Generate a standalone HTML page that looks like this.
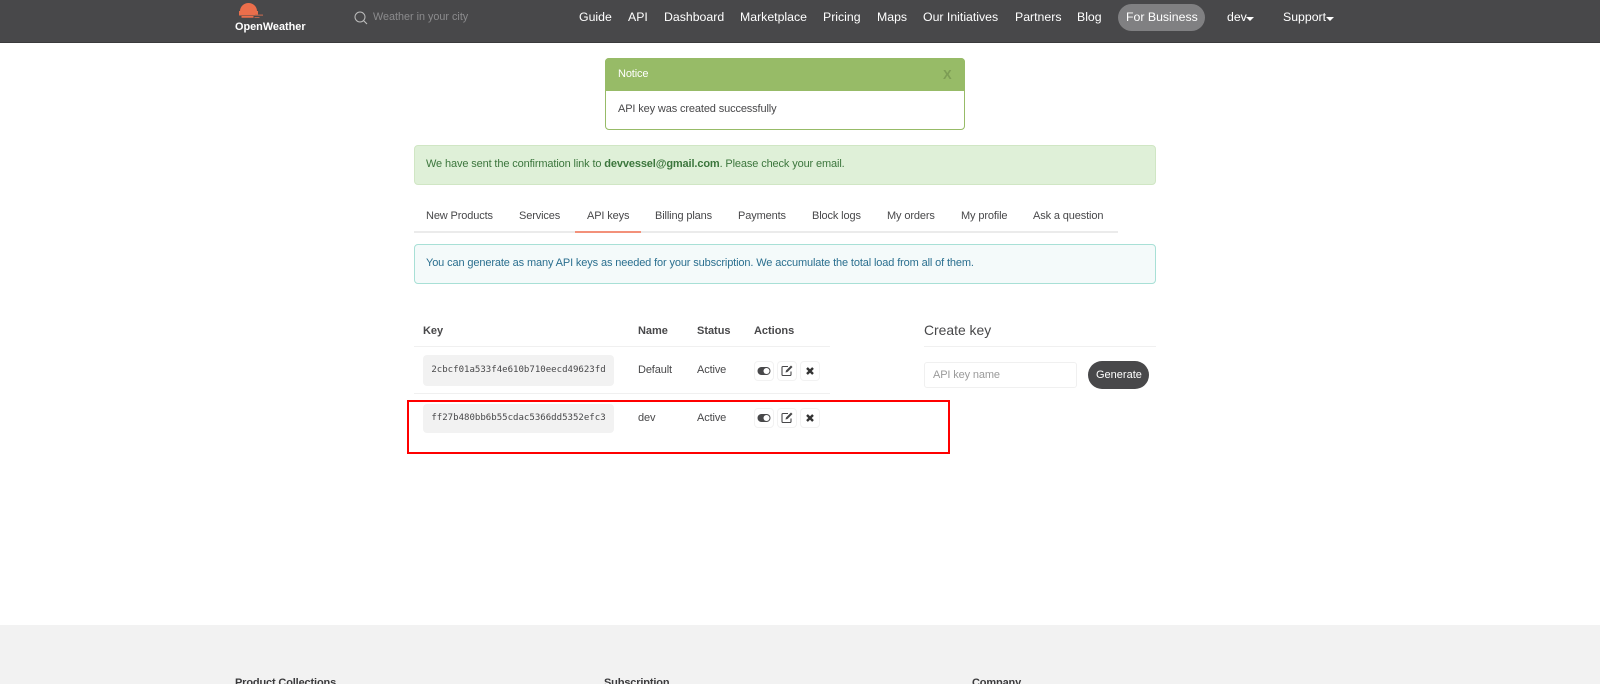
<!DOCTYPE html>
<html>
<head>
<meta charset="utf-8">
<style>
html,body{margin:0;padding:0;background:#fff;overflow:hidden;width:1600px;height:684px}
#p{width:1600px;height:684px;overflow:hidden;position:relative;font-family:"Liberation Sans",Arial,sans-serif;font-size:11px;letter-spacing:-.13px;color:#48484a}
.a{position:absolute;white-space:nowrap;line-height:16px}
.nav{color:#fff;font-size:12.3px;letter-spacing:0;top:9px}
.tab{top:208px;color:#48484a}
.box{position:absolute;box-sizing:border-box}
.th{font-weight:bold;top:323px;letter-spacing:-.02px}
.code{position:absolute;left:423px;width:191px;background:#f2f2f2;border-radius:4px;font-family:"DejaVu Sans Mono","Liberation Mono",monospace;font-size:9.06px;letter-spacing:0;color:#48484a;text-align:center;white-space:nowrap}
.btn{position:absolute;width:20px;height:20px;box-sizing:border-box;border:1px solid #f2f2f2;border-radius:4px;background:#fff}
.btn svg{position:absolute;left:-1px;top:-1.500px}
.ft{font-weight:bold;top:675px;color:#3a3a3c;letter-spacing:-.15px}
</style>
</head>
<body>
<div id="p">
<div class="box" style="left:0;top:0;width:1600px;height:43px;background:#48484a;border-bottom:1px solid #3a3a3c"></div>
<svg class="box" style="left:235px;top:0" width="32" height="22" viewBox="0 0 32 22">
<path d="M5 11a8.500 8 0 0 1 17 0z" fill="#eb6e4b"/>
<path d="M4 11h19v4.500H4zM6.500 16h12v1.800h-12z" fill="#eb6e4b"/>
<path d="M20 14.500h8v1.300h-8zM19.500 17h5v1h-5z" fill="#b5654f"/>
</svg>
<div class="a" style="left:235px;top:19px;color:#fff;font-size:10.9px;letter-spacing:0;font-weight:bold">OpenWeather</div>
<svg class="box" style="left:354px;top:11px" width="14" height="14" viewBox="0 0 14 14"><circle cx="6" cy="6" r="5" fill="none" stroke="#bdbdbd" stroke-width="1"/><path d="M9.500 9.500L13 13" stroke="#bdbdbd" stroke-width="1.100"/></svg>
<div class="a" style="left:373px;top:9px;color:#8b8b8d;font-size:10.8px;letter-spacing:0">Weather in your city</div>

<div class="a nav" style="left:579px">Guide</div>
<div class="a nav" style="left:628px">API</div>
<div class="a nav" style="left:664px">Dashboard</div>
<div class="a nav" style="left:740px">Marketplace</div>
<div class="a nav" style="left:823px">Pricing</div>
<div class="a nav" style="left:877px">Maps</div>
<div class="a nav" style="left:923px">Our Initiatives</div>
<div class="a nav" style="left:1015px">Partners</div>
<div class="a nav" style="left:1077px">Blog</div>
<div class="box" style="left:1118px;top:4px;width:87px;height:27px;border-radius:14px;background:#808082"></div>
<div class="a nav" style="left:1126px">For Business</div>
<div class="a nav" style="left:1227px">dev</div>
<div class="box" style="left:1246px;top:17px;border:4px solid transparent;border-top:4px solid #fff;border-bottom:0"></div>
<div class="a nav" style="left:1283px">Support</div>
<div class="box" style="left:1326px;top:17px;border:4px solid transparent;border-top:4px solid #fff;border-bottom:0"></div>

<div class="box" style="left:605px;top:58px;width:360px;height:72px;border:1px solid #97bb67;border-radius:4px;background:#fff"></div>
<div class="box" style="left:605px;top:58px;width:360px;height:33px;background:#97bb67;border-radius:4px 4px 0 0"></div>
<div class="a" style="left:618px;top:66px;color:#fff">Notice</div>
<div class="a" style="left:943px;top:67px;color:#7d9d55;font-weight:bold;font-size:13px;letter-spacing:0">X</div>
<div class="a" style="left:618px;top:101px">API key was created successfully</div>

<div class="box" style="left:414px;top:145px;width:742px;height:40px;background:#dff0d8;border:1px solid #d0e6c4;border-radius:4px"></div>
<div class="a" style="left:426px;top:156px;color:#3c763d">We have sent the confirmation link to <b>devvessel@gmail.com</b>. Please check your email.</div>

<div class="box" style="left:414px;top:231px;width:704px;height:2px;background:#ebebeb"></div>
<div class="box" style="left:575px;top:231px;width:66px;height:2px;background:#f3917a"></div>
<div class="a tab" style="left:426px">New Products</div>
<div class="a tab" style="left:519px">Services</div>
<div class="a tab" style="left:587px">API keys</div>
<div class="a tab" style="left:655px">Billing plans</div>
<div class="a tab" style="left:738px">Payments</div>
<div class="a tab" style="left:812px">Block logs</div>
<div class="a tab" style="left:887px">My orders</div>
<div class="a tab" style="left:961px">My profile</div>
<div class="a tab" style="left:1033px">Ask a question</div>

<div class="box" style="left:414px;top:244px;width:742px;height:40px;background:#f4fafa;border:1px solid #a8e0d6;border-radius:4px"></div>
<div class="a" style="left:426px;top:255px;color:#2a6f8f">You can generate as many API keys as needed for your subscription. We accumulate the total load from all of them.</div>

<div class="a th" style="left:423px">Key</div>
<div class="a th" style="left:638px">Name</div>
<div class="a th" style="left:697px">Status</div>
<div class="a th" style="left:754px">Actions</div>
<div class="box" style="left:414px;top:346px;width:416px;height:1px;background:#f0f0f0"></div>
<div class="box" style="left:414px;top:393px;width:416px;height:1px;background:#f0f0f0"></div>

<div class="code" style="top:355px;height:31px;line-height:31px">2cbcf01a533f4e610b710eecd49623fd</div>
<div class="a" style="left:638px;top:362px">Default</div>
<div class="a" style="left:697px;top:362px">Active</div>
<div class="btn" style="left:754px;top:361px"><svg width="20" height="20" viewBox="0 0 20 20"><rect x="3.500" y="6" width="13" height="8" rx="4" fill="#48484a"/><circle cx="12.500" cy="10" r="3" fill="#fff"/></svg></div>
<div class="btn" style="left:777px;top:361px"><svg width="20" height="20" viewBox="0 0 20 20"><path d="M11 5.500H6a1 1 0 0 0-1 1v7a1 1 0 0 0 1 1h7a1 1 0 0 0 1-1v-3" fill="none" stroke="#48484a" stroke-width="1.100"/><path d="M8.500 11.500l.5-2 5-5 1.500 1.500-5 5z" fill="#48484a"/></svg></div>
<div class="btn" style="left:800px;top:361px"><svg width="20" height="20" viewBox="0 0 20 20"><path d="M7 7l6 6M13 7l-6 6" stroke="#333" stroke-width="2.400"/></svg></div>

<div class="code" style="top:404px;height:29px;line-height:29px">ff27b480bb6b55cdac5366dd5352efc3</div>
<div class="a" style="left:638px;top:410px">dev</div>
<div class="a" style="left:697px;top:410px">Active</div>
<div class="btn" style="left:754px;top:408px"><svg width="20" height="20" viewBox="0 0 20 20"><rect x="3.500" y="6" width="13" height="8" rx="4" fill="#48484a"/><circle cx="12.500" cy="10" r="3" fill="#fff"/></svg></div>
<div class="btn" style="left:777px;top:408px"><svg width="20" height="20" viewBox="0 0 20 20"><path d="M11 5.500H6a1 1 0 0 0-1 1v7a1 1 0 0 0 1 1h7a1 1 0 0 0 1-1v-3" fill="none" stroke="#48484a" stroke-width="1.100"/><path d="M8.500 11.500l.5-2 5-5 1.500 1.500-5 5z" fill="#48484a"/></svg></div>
<div class="btn" style="left:800px;top:408px"><svg width="20" height="20" viewBox="0 0 20 20"><path d="M7 7l6 6M13 7l-6 6" stroke="#333" stroke-width="2.400"/></svg></div>

<div class="box" style="left:407px;top:400px;width:543px;height:54px;border:2px solid #f00"></div>

<div class="a" style="left:924px;top:321px;font-size:13.9px;letter-spacing:0;line-height:18px">Create key</div>
<div class="box" style="left:924px;top:346px;width:232px;height:1px;background:#f0f0f0"></div>
<div class="box" style="left:924px;top:362px;width:153px;height:26px;border:1px solid #f0f0f0;border-radius:3px"></div>
<div class="a" style="left:933px;top:367px;color:#9a9a9a">API key name</div>
<div class="box" style="left:1088px;top:361px;width:61px;height:28px;border-radius:14px;background:#48484a"></div>
<div class="a" style="left:1096px;top:367px;color:#fff;letter-spacing:0">Generate</div>

<div class="box" style="left:0;top:625px;width:1600px;height:59px;background:#f2f2f2"></div>
<div class="a ft" style="left:235px">Product Collections</div>
<div class="a ft" style="left:604px">Subscription</div>
<div class="a ft" style="left:972px">Company</div>
</div>
</body>
</html>
